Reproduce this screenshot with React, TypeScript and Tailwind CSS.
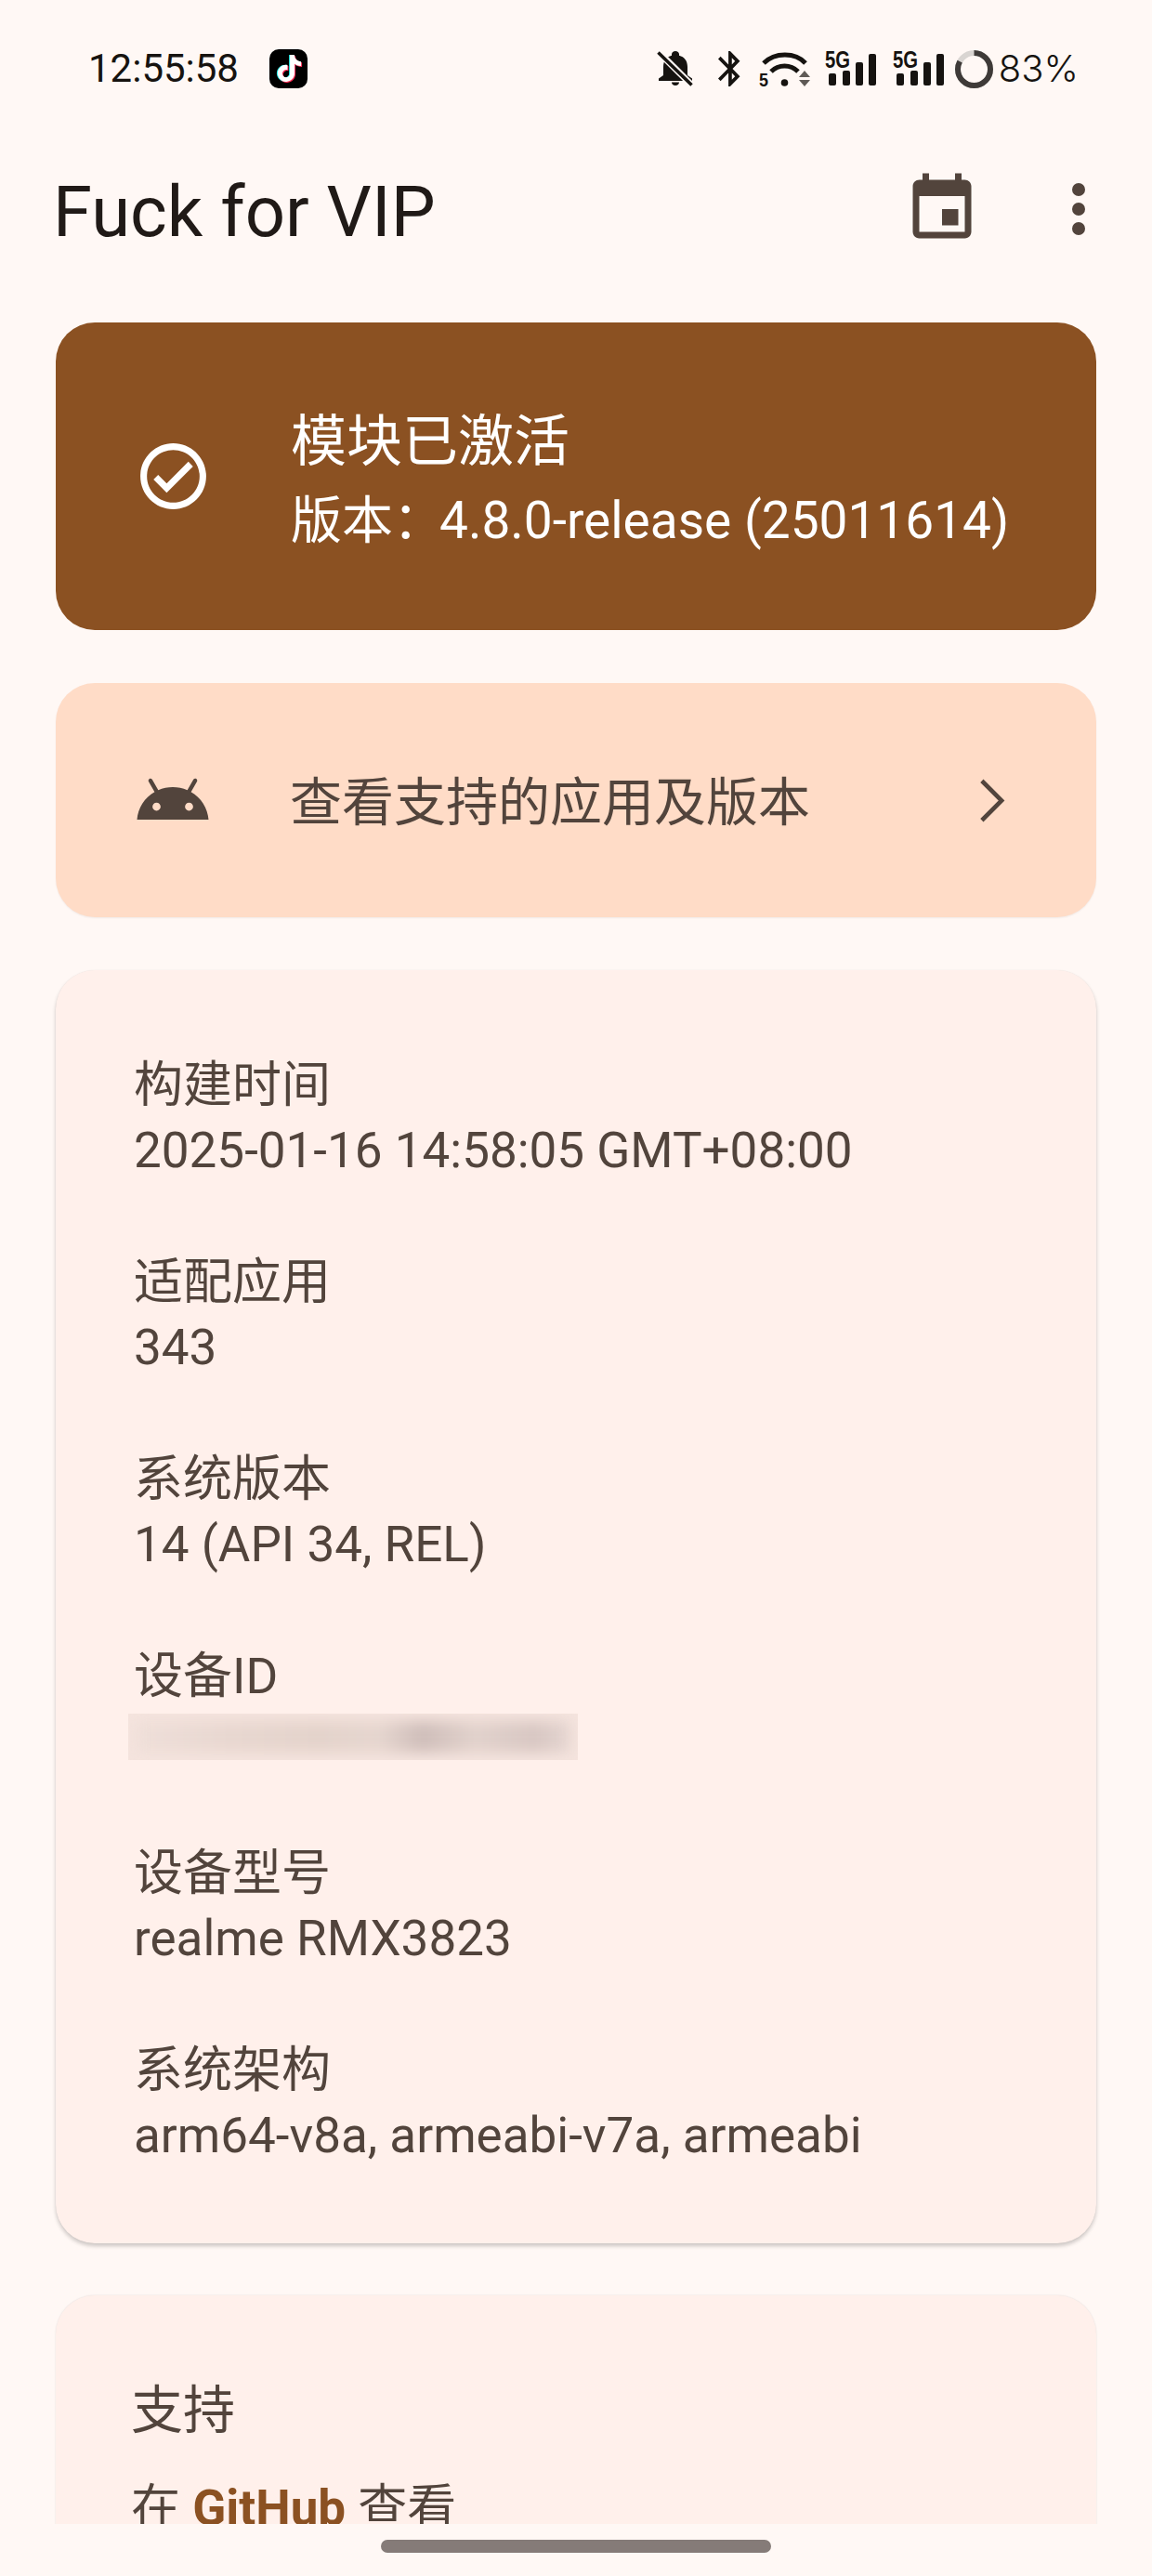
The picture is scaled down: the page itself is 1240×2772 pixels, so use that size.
import React from 'react';
import { SiTiktok } from 'react-icons/si';

type InfoRow = {
  label: string;
  value?: string;
};

const INFO_ROWS: InfoRow[] = [
  { label: '构建时间', value: '2025-01-16 14:58:05 GMT+08:00' },
  { label: '适配应用', value: '343' },
  { label: '系统版本', value: '14 (API 34, REL)' },
  { label: '设备ID' },
  { label: '设备型号', value: 'realme RMX3823' },
  { label: '系统架构', value: 'arm64-v8a, armeabi-v7a, armeabi' },
];

function TiktokBadge() {
  return (
    <div className="relative h-[42px] w-[41px] rounded-[10px] bg-black">
      <SiTiktok className="absolute left-[6px] top-[6px] text-[29px] text-[#25f4ee]" />
      <SiTiktok className="absolute left-[8px] top-[7px] text-[29px] text-[#fe2c55]" />
      <SiTiktok className="absolute left-[7px] top-[6px] text-[29px] text-white" />
    </div>
  );
}

function BellOff() {
  return (
    <svg width="40" height="38" viewBox="0 0 40 38">
      <path
        fill="#161310"
        d="M20 37c2.400 0 4-1.600 4-3.600h-8c0 2 1.600 3.600 4 3.600zM33 26V17c0-6.600-3.400-11-9-12.300V3.500C24 1.500 22.200 0 20 0s-4 1.500-4 3.500v1.200C10.400 6 7 10.400 7 17v9l-5 3.500V32h36v-2.500z"
      />
      <path d="M2 1l36 36" stroke="#fff8f5" strokeWidth="7" />
      <path d="M1.500 1.500l36 35" stroke="#161310" strokeWidth="3.500" />
    </svg>
  );
}

function Bluetooth() {
  return (
    <svg width="24" height="38" viewBox="5 2 13 20" preserveAspectRatio="none">
      <path
        fill="#161310"
        d="M17.710 7.710L12 2h-1v7.590L6.410 5 5 6.410 10.590 12 5 17.590 6.410 19 11 14.410V22h1l5.710-5.710-4.300-4.290 4.300-4.290zM13 5.830l1.880 1.880L13 9.590V5.830zm1.880 10.460L13 18.170v-3.760l1.880 1.880z"
      />
    </svg>
  );
}

function WifiIcon() {
  return (
    <svg className="overflow-visible" width="56" height="40" viewBox="0 0 56 40">
      <path d="M5 14C17 2 39 2 50 14" fill="none" stroke="#161310" strokeWidth="5" />
      <path d="M13 23C21 15 34 15 42 23" fill="none" stroke="#161310" strokeWidth="5" />
      <circle cx="27.500" cy="35" r="3.800" fill="#161310" />
      <text x="0" y="39" fontSize="21" fontWeight="700" fill="#161310" fontFamily="Liberation Sans" textLength="10" lengthAdjust="spacingAndGlyphs">
        5
      </text>
      <path d="M49 22l6 7H43zM43 32h12l-6 7z" fill="#5f5a56" />
    </svg>
  );
}

function SignalIcon() {
  return (
    <svg className="overflow-visible" width="55" height="38" viewBox="0 0 55 38">
      <text x="0" y="18" fontSize="25" fontWeight="700" fill="#161310" fontFamily="Liberation Sans" textLength="27" lengthAdjust="spacingAndGlyphs">
        5G
      </text>
      <rect x="4" y="24" width="8" height="13" rx="2" fill="#161310" />
      <rect x="19" y="21" width="8" height="16" rx="2" fill="#161310" />
      <rect x="33" y="12" width="8" height="25" rx="2" fill="#161310" />
      <rect x="47" y="3" width="8" height="34" rx="2" fill="#161310" />
    </svg>
  );
}

function BatteryRing() {
  return (
    <svg width="41" height="41" viewBox="0 0 41 41">
      <circle cx="20.500" cy="20.500" r="17.500" fill="none" stroke="#d9d5d2" strokeWidth="6" />
      <circle
        cx="20.500"
        cy="20.500"
        r="17.500"
        fill="none"
        stroke="#3e3a38"
        strokeWidth="6"
        pathLength="100"
        strokeDasharray="83 17"
        transform="rotate(-90 20.500 20.500)"
      />
    </svg>
  );
}

function StatusBar() {
  return (
    <div className="flex h-[148px] shrink-0 items-center justify-between pl-[95px] pr-[79px] text-[#161310]">
      <div className="flex items-center gap-[33px]">
        <span className="text-[42px] leading-none">12:55:58</span>
        <TiktokBadge />
      </div>
      <div className="flex items-center">
        <BellOff />
        <div className="ml-[26px]">
          <Bluetooth />
        </div>
        <div className="ml-[20px]">
          <WifiIcon />
        </div>
        <div className="ml-[15px]">
          <SignalIcon />
        </div>
        <div className="ml-[18px]">
          <SignalIcon />
        </div>
        <div className="ml-[12px]">
          <BatteryRing />
        </div>
        <span className="ml-[6px] font-['Inter',sans-serif] text-[40px] font-light leading-none">83%</span>
      </div>
    </div>
  );
}

function AppBar() {
  return (
    <div className="flex h-[156px] shrink-0 items-center pl-[57px] pr-[37px]">
      <h1 className="mt-[3px] flex-1 text-[76px] font-normal leading-none text-[#201a17]">Fuck for VIP</h1>
      <svg className="mt-[-2px]" width="84" height="84" viewBox="0 0 24 24" fill="#52443c">
        <path d="M17 12h-5v5h5v-5zM16 1v2H8V1H6v2H5c-1.110 0-1.990.900-1.990 2L3 19c0 1.100.890 2 2 2h14c1.100 0 2-.900 2-2V5c0-1.100-.900-2-2-2h-1V1h-2zm3 18H5V8h14v11z" />
      </svg>
      <svg className="ml-[63px] mt-[-2px]" width="84" height="84" viewBox="0 0 24 24" fill="#52443c">
        <circle cx="12" cy="6" r="2" />
        <circle cx="12" cy="12" r="2" />
        <circle cx="12" cy="18" r="2" />
      </svg>
    </div>
  );
}

function StatusCard() {
  return (
    <div className="flex h-[331px] items-center rounded-[42px] bg-[#8b5122] pl-[84px] text-white">
      <svg width="85" height="85" viewBox="0 0 24 24" fill="currentColor">
        <path d="M16.590 7.580L10 14.170l-2.590-2.580L6 13l4 4 8-8zM12 2C6.480 2 2 6.480 2 12s4.480 10 10 10 10-4.480 10-10S17.520 2 12 2zm0 18c-4.420 0-8-3.580-8-8s3.580-8 8-8 8 3.580 8 8-3.580 8-8 8z" />
      </svg>
      <div className="ml-[84px] pt-[6px]">
        <div className="text-[60px] leading-[80px]">模块已激活</div>
        <div className="mt-[8px] text-[55px] leading-[72px]">
          <span className="mr-[-5px]">版本：</span>4.8.0-release (25011614)
        </div>
      </div>
    </div>
  );
}

function SupportedAppsCard() {
  return (
    <div className="mt-[57px] flex h-[252px] items-center rounded-[42px] bg-[#ffdcc7] pl-[84px] pr-[70px] text-[#52443c] shadow-[0_1px_2px_rgba(0,0,0,0.06)]">
      <svg width="84" height="84" viewBox="0 0 24 24" fill="currentColor">
        <path d="M17.600 9.480l1.840-3.180c.160-.310.040-.690-.260-.850-.290-.150-.650-.060-.830.220l-1.880 3.240c-2.860-1.210-6.080-1.210-8.940 0L5.650 5.670c-.190-.290-.580-.380-.870-.200-.280.180-.370.540-.220.830L6.400 9.480C3.300 11.250 1.280 14.440 1 18h22c-.280-3.560-2.300-6.750-5.400-8.520zM7 15.250c-.690 0-1.250-.560-1.250-1.250s.560-1.250 1.250-1.250 1.250.560 1.250 1.250-.560 1.250-1.250 1.250zm10 0c-.690 0-1.250-.560-1.250-1.250s.560-1.250 1.250-1.250 1.250.560 1.250 1.250-.560 1.250-1.250 1.250z" />
      </svg>
      <span className="ml-[84px] flex-1 pt-[6px] text-[56px] leading-none">查看支持的应用及版本</span>
      <svg width="85" height="85" viewBox="0 0 24 24" fill="none" stroke="currentColor" strokeWidth="1.300">
        <path d="M9 6l6 6-6 6" />
      </svg>
    </div>
  );
}

function BlurredValue() {
  return (
    <div className="ml-[-6px] mt-[5px] h-[50px] w-[484px] overflow-hidden bg-[#f5e4de]">
      <div className="mx-[8px] mt-[8px] h-[34px] bg-[linear-gradient(90deg,#efdfd9_0%,#e8d7d0_22%,#e4d3cb_42%,#e6d6cf_56%,#cfbeba_66%,#e2d2cc_78%,#d8c7c3_92%,#e6d6d1_100%)] blur-[7px]" />
    </div>
  );
}

function InfoCard() {
  return (
    <div className="mt-[57px] flex h-[1370px] flex-col gap-[72px] rounded-[42px] bg-[#fff0eb] pl-[84px] pt-[89px] text-[#52443c] shadow-[0_3px_4px_rgba(0,0,0,0.2),0_0_1px_rgba(0,0,0,0.08)]">
      {INFO_ROWS.map((row) => (
        <div key={row.label} className="h-[140px] text-[53px] leading-[70px]">
          <div>{row.label}</div>
          {row.value ? <div>{row.value}</div> : <BlurredValue />}
        </div>
      ))}
    </div>
  );
}

function SupportCard() {
  return (
    <div className="mt-[56px] rounded-[42px] bg-[#fff0eb] pb-[60px] pl-[81px] pt-[89px] text-[#52443c] shadow-[0_0_2px_rgba(0,0,0,0.12)]">
      <div className="text-[56px] leading-[70px]">支持</div>
      <div className="mt-[35px] text-[53px] leading-[70px]">
        在 <span className="font-bold text-[#8b5122]">GitHub</span> 查看
      </div>
    </div>
  );
}

export default function App() {
  return (
    <div className="flex h-[2772px] w-[1240px] flex-col overflow-hidden bg-[#fff8f5] font-['Roboto','Noto_Sans_CJK_SC',sans-serif]">
      <StatusBar />
      <AppBar />
      <div className="h-[2412px] shrink-0 overflow-hidden px-[60px] pt-[43px]">
        <StatusCard />
        <SupportedAppsCard />
        <InfoCard />
        <SupportCard />
      </div>
      <div className="flex flex-1 justify-center pt-[17px]">
        <div className="h-[14px] w-[420px] rounded-full bg-[#857b78]" />
      </div>
    </div>
  );
}
